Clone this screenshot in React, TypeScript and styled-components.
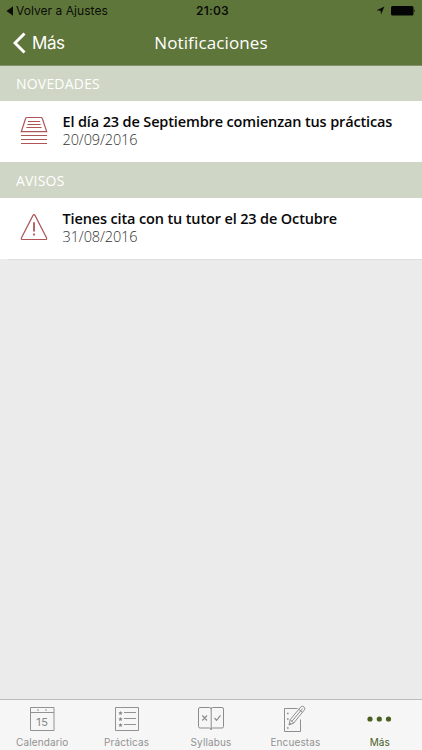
import React from 'react';
import styled, { createGlobalStyle } from 'styled-components';

const GlobalStyle = createGlobalStyle`
  * { box-sizing: border-box; }
  body { margin: 0; }
`;

const Screen = styled.div`
  display: flex;
  flex-direction: column;
  width: 422px;
  height: 750px;
  overflow: hidden;
  background: #ebebeb;
  font-family: 'Open Sans', 'Noto Sans', sans-serif;
  white-space: nowrap;
  svg { display: block; flex: none; }
`;

const TopArea = styled.header`
  flex: none;
  height: 66px;
  background: #5f763b;
  border-bottom: 1px solid #84906f;
`;

const StatusBar = styled.div`
  display: grid;
  grid-template-columns: 1fr auto 1fr;
  align-items: center;
  height: 21px;
  padding: 0 6px 0 6px;
  color: #0b0d07;
  font: 12px/20px Inter, sans-serif;
`;

const BackToApp = styled.div`
  display: flex;
  align-items: center;
  gap: 3px;
  letter-spacing: 0.05px;
`;

const Clock = styled.div`
  font-weight: 600;
  letter-spacing: 0.2px;
  padding: 1px 0 0 3px;
`;

const StatusIcons = styled.div`
  display: flex;
  justify-content: flex-end;
  align-items: center;
  gap: 6px;
`;

const NavBar = styled.div`
  display: grid;
  grid-template-columns: 1fr auto 1fr;
  align-items: center;
  height: 44px;
  padding-left: 13px;
  color: #fff;
`;

const BackButton = styled.div`
  display: flex;
  align-items: center;
  gap: 6px;
  font: 17px/24px Inter, sans-serif;
  letter-spacing: -0.45px;
`;

const Title = styled.h1`
  margin: 0 13px 0 0;
  font-size: 17px;
  line-height: 24px;
  font-weight: 400;
  letter-spacing: 0.13px;
`;

const SectionHeader = styled.h2<{ $height: number }>`
  flex: none;
  margin: 0;
  height: ${({ $height }) => $height}px;
  padding-left: 16px;
  background: #cfd6c5;
  color: #fff;
  font-size: 14px;
  line-height: ${({ $height }) => $height + 1}px;
  font-weight: 500;
  letter-spacing: 0.2px;
`;

const Row = styled.article`
  flex: none;
  display: flex;
  align-items: center;
  height: 61px;
  padding: 0 0 1px 20px;
  gap: 14.5px;
  background: #fff;
`;

const RowText = styled.div`
  display: flex;
  flex-direction: column;
  margin-top: -1px;
`;

const RowTitle = styled.div`
  color: #080808;
  font-size: 14.5px;
  line-height: 19px;
  font-weight: 600;
  letter-spacing: -0.14px;
`;

const RowDate = styled.div`
  color: #333;
  font-size: 14.5px;
  line-height: 18px;
  font-weight: 300;
  letter-spacing: -0.12px;
`;

const EndLine = styled.div`
  flex: none;
  height: 1px;
  margin-left: 8px;
  background: #dedede;
`;

const TabBar = styled.nav`
  flex: none;
  display: grid;
  grid-template-columns: repeat(5, 1fr);
  height: 51px;
  margin-top: auto;
  border-top: 1px solid #bcbcbc;
  background: #f6f6f6;
`;

const Tab = styled.div<{ $active?: boolean }>`
  display: flex;
  flex-direction: column;
  align-items: center;
  padding-top: 3px;
  color: ${({ $active }) => ($active ? '#48611f' : '#929292')};
  font: 400 10px/13px Inter, sans-serif;
  letter-spacing: 0.12px;
  svg { margin-bottom: 3px; }
`;

const TrayIcon = () => (
  <svg width="28" height="30" viewBox="0 0 28 30" fill="none" stroke="#ad5557" strokeWidth="1.2">
    <path d="M1.3 15.6 5.6 2.5Q5.9 1.5 6.9 1.5H21Q22 1.5 22.3 2.5L26.7 15.6H1.3Z" />
    <path d="M8 5.5h12M7.4 8.5h13.2M6.4 11.5h15.2M1 19.5h26M1 23.5h26M1 27.5h26" />
  </svg>
);

const WarningIcon = () => (
  <svg width="28" height="30" viewBox="0 0 28 30" fill="none" stroke="#ad5557" strokeWidth="1.2">
    <path d="M13 2.4Q14 .8 15 2.4L26.5 24.7Q27.2 26.5 25.2 26.5H2.8Q.8 26.5 1.5 24.7Z" />
    <path d="M14 9.3v9.2" strokeWidth="1.8" />
    <path d="M14 20.5v2" strokeWidth="1.8" />
  </svg>
);

const CalendarIcon = () => (
  <svg width="30" height="30" viewBox="0 0 30 30" fill="none" stroke="#929292">
    <path d="M3.5 4.5h23.5v23h-23.5zM3.5 9.5h23.5" />
    <path d="M10 7h2M18 7h2" strokeWidth="1.2" />
    <text x="15.4" y="22.5" textAnchor="middle" fill="#858585" stroke="none" fontSize="11" letterSpacing=".5">15</text>
  </svg>
);

const star = (y: number) => `M8.5 ${y - 2}l.6 1.3 1.6.1-1.2 1 .4 1.6-1.4-.8-1.4.8.4-1.6-1.2-1 1.6-.1Z`;

const ListIcon = () => (
  <svg width="30" height="30" viewBox="0 0 30 30" fill="none" stroke="#929292">
    <path d="M3.5 4.5h23v23h-23z" />
    <path d={star(10) + star(16) + star(22)} fill="#858585" stroke="none" />
    <path d="M12 9.5h12M12 15.5h12M12 21.5h12" />
  </svg>
);

const BookIcon = () => (
  <svg width="30" height="30" viewBox="0 0 30 30" fill="none" stroke="#8c8c8c">
    <path d="M4 4.5h9.5q1.5 0 1.5 1.5 0-1.5 1.5-1.5H26q1.5 0 1.5 1.5v17.5q0 1.5-1.5 1.5h-9.5q-1.5 0-1.5 1.5 0-1.5-1.5-1.5H4q-1.5 0-1.5-1.5V6q0-1.5 1.5-1.5Z" />
    <path d="M15.2 5v22" />
    <path d="m6.3 12.5 4.7 5m0-5-4.7 5M18.5 15l2 2.3 4-5" strokeWidth="1.2" />
  </svg>
);

const PencilIcon = () => (
  <svg width="30" height="30" viewBox="0 0 30 30" fill="none" stroke="#8f8f8f">
    <path d="M17.5 5.5h-13v23h16v-12" />
    <path d="m9 22 1.2-5.3L20.7 4q1.7-1.5 3.2-.2 1.8 1.5.3 3.3L13.8 20 9 22Zm1.2-5.3 3.6 3.3m-1.9-1.6L22.5 5.6M18.8 6.3l3.6 3.1M9 22l2-2.2" />
    <path d="M7 10.5h1.6M7 16h1.6M7 25h1.6" strokeWidth="1.7" />
  </svg>
);

const MoreIcon = () => (
  <svg width="30" height="30" viewBox="0 0 30 30" fill="#48611f">
    <circle cx="5" cy="16" r="2.6" /><circle cx="14.3" cy="16" r="2.6" /><circle cx="23.5" cy="16" r="2.6" />
  </svg>
);

const tabs = [
  { label: 'Calendario', icon: <CalendarIcon /> },
  { label: 'Prácticas', icon: <ListIcon /> },
  { label: 'Syllabus', icon: <BookIcon /> },
  { label: 'Encuestas', icon: <PencilIcon /> },
  { label: 'Más', icon: <MoreIcon />, active: true },
];

export default function App() {
  return (
    <Screen>
      <GlobalStyle />
      <TopArea>
        <StatusBar>
          <BackToApp>
            <svg width="7" height="10" viewBox="0 0 7 10"><path d="M7 .3v9.4L.5 5Z" fill="#0b0d07" /></svg>
            Volver a Ajustes
          </BackToApp>
          <Clock>21:03</Clock>
          <StatusIcons>
            <svg width="9" height="9" viewBox="0 0 9 9"><path d="M8.5.5 5 8.5 4.6 4.7.5 4.2Z" fill="#0b0d07" /></svg>
            <svg width="25" height="10" viewBox="0 0 25 10" fill="#050505"><rect width="22.5" height="9.5" rx="1.5" /><path d="M23.3 3.3q1.5 1.5 0 3Z" /></svg>
          </StatusIcons>
        </StatusBar>
        <NavBar>
          <BackButton>
            <svg width="13" height="22" viewBox="0 0 13 22"><path d="M11.5 1.5 2 11l9.5 9.5" fill="none" stroke="#fff" strokeWidth="3" /></svg>
            Más
          </BackButton>
          <Title>Notificaciones</Title>
        </NavBar>
      </TopArea>
      <SectionHeader $height={35}>NOVEDADES</SectionHeader>
      <Row>
        <TrayIcon />
        <RowText>
          <RowTitle>El día 23 de Septiembre comienzan tus prácticas</RowTitle>
          <RowDate>20/09/2016</RowDate>
        </RowText>
      </Row>
      <SectionHeader $height={36}>AVISOS</SectionHeader>
      <Row>
        <WarningIcon />
        <RowText>
          <RowTitle>Tienes cita con tu tutor el 23 de Octubre</RowTitle>
          <RowDate>31/08/2016</RowDate>
        </RowText>
      </Row>
      <EndLine />
      <TabBar>
        {tabs.map((t) => (
          <Tab key={t.label} $active={t.active}>
            {t.icon}
            {t.label}
          </Tab>
        ))}
      </TabBar>
    </Screen>
  );
}
